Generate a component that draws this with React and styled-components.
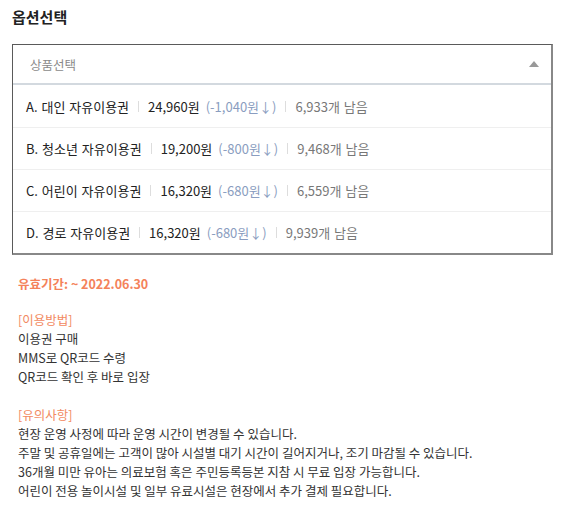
import React from 'react'
import styled, { createGlobalStyle } from 'styled-components';

const GlobalStyle = createGlobalStyle`
  body {
    margin: 0;
    background: #fff;
    font-family: "Noto Sans CJK KR", "Noto Sans", sans-serif;
  }
`;

const Container = styled.div`
  width: 576px;
  padding: 6px 0 0 12px;
  box-sizing: border-box;
`;

const Title = styled.h2`
  margin: 0;
  font-size: 15px;
  font-weight: 700;
  line-height: 22px;
  color: #222;
`;

const SelectBox = styled.div`
  margin-top: 16px;
  width: 541px;
  box-sizing: border-box;
  border: 1px solid #5a5a5a;
  border-right: 2px solid #888;
  border-bottom: 2px solid #888;
`;

const SelectHead = styled.div`
  height: 38px;
  display: flex;
  align-items: center;
  justify-content: space-between;
  padding: 0 12px 0 17px;
  border-bottom: 2px solid #d3d9df;
  font-size: 12.5px;
  color: #8a8a8a;
`;

const Caret = styled.span`
  width: 0;
  height: 0;
  border-left: 5px solid transparent;
  border-right: 5px solid transparent;
  border-bottom: 6px solid #999;
`;

const OptionRow = styled.div`
  height: 42px;
  box-sizing: border-box;
  display: flex;
  align-items: center;
  padding: 0 13px;
  border-top: ${p => (p.first ? 'none' : '1px solid #efefef')};
  font-size: 13px;
  word-spacing: 1px;
  color: #222;
  white-space: nowrap;
`;

const Bar = styled.span`
  display: inline-block;
  width: 1px;
  height: 11px;
  background: #ddd;
  margin: 0 9px;
`;

const Discount = styled.span`
  color: #8a9dc0;
  margin-left: 6px;
`;

const Stock = styled.span`
  color: #777;
`;

const Info = styled.div`
  padding: 19px 0 0 6px;
  font-size: 12.5px;
  line-height: 19px;
  color: #333;
`;

const Period = styled.p`
  margin: 0 0 17px;
  color: #f4825a;
  font-weight: 700;
`;

const Block = styled.div`
  margin-bottom: 19px;
`;

const Heading = styled.div`
  color: #f28a62;
`;

const Line = styled.div``;

const options = [
  { name: 'A. 대인 자유이용권', price: '24,960원', off: '(-1,040원↓)', stock: '6,933개 남음' },
  { name: 'B. 청소년 자유이용권', price: '19,200원', off: '(-800원↓)', stock: '9,468개 남음' },
  { name: 'C. 어린이 자유이용권', price: '16,320원', off: '(-680원↓)', stock: '6,559개 남음' },
  { name: 'D. 경로 자유이용권', price: '16,320원', off: '(-680원↓)', stock: '9,939개 남음' },
];

const App = () => {
  return (
    <Container>
      <GlobalStyle />
      <Title>옵션선택</Title>
      <SelectBox>
        <SelectHead>
          <span>상품선택</span>
          <Caret />
        </SelectHead>
        {options.map((o, i) => (
          <OptionRow key={o.name} first={i === 0}>
            <span>{o.name}</span>
            <Bar />
            <span>{o.price}</span>
            <Discount>{o.off}</Discount>
            <Bar />
            <Stock>{o.stock}</Stock>
          </OptionRow>
        ))}
      </SelectBox>
      <Info>
        <Period>유효기간: ~ 2022.06.30</Period>
        <Block>
          <Heading>[이용방법]</Heading>
          <Line>이용권 구매</Line>
          <Line>MMS로 QR코드 수령</Line>
          <Line>QR코드 확인 후 바로 입장</Line>
        </Block>
        <Block>
          <Heading>[유의사항]</Heading>
          <Line>현장 운영 사정에 따라 운영 시간이 변경될 수 있습니다.</Line>
          <Line>주말 및 공휴일에는 고객이 많아 시설별 대기 시간이 길어지거나, 조기 마감될 수 있습니다.</Line>
          <Line>36개월 미만 유아는 의료보험 혹은 주민등록등본 지참 시 무료 입장 가능합니다.</Line>
          <Line>어린이 전용 놀이시설 및 일부 유료시설은 현장에서 추가 결제 필요합니다.</Line>
        </Block>
      </Info>
    </Container>
  )
}

export default App
